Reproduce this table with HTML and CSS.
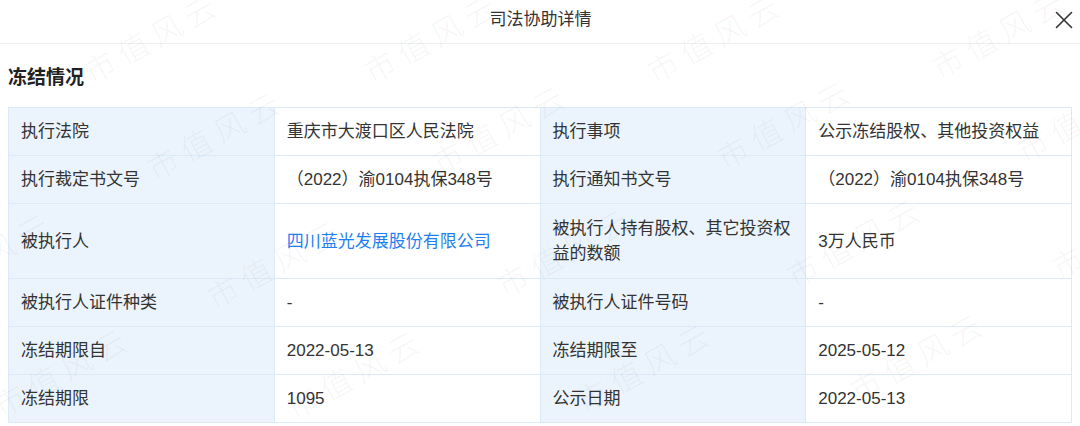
FILE: index.html
```html
<!DOCTYPE html>
<html lang="zh-CN">
<head>
<meta charset="utf-8">
<title>司法协助详情</title>
<link rel="stylesheet" href="styles.css">
</head>
<body>
<div class="dialog">
  <header class="dialog-header">
    <span class="spacer"></span>
    <h1 class="dialog-title">司法协助详情</h1>
    <button class="close-btn" aria-label="关闭">
      <svg width="18" height="18" viewBox="0 0 18 18"><path d="M1.5 1.5 L16.5 16.5 M16.5 1.5 L1.5 16.5" stroke="#333" stroke-width="1.6" fill="none" stroke-linecap="round"/></svg>
    </button>
  </header>
  <main class="dialog-body">
    <h2 class="section-title">冻结情况</h2>
    <table class="info-table">
      <tbody>
        <tr>
          <th>执行法院</th><td>重庆市大渡口区人民法院</td>
          <th>执行事项</th><td>公示冻结股权、其他投资权益</td>
        </tr>
        <tr>
          <th>执行裁定书文号</th><td>（2022）渝0104执保348号</td>
          <th>执行通知书文号</th><td>（2022）渝0104执保348号</td>
        </tr>
        <tr class="tall">
          <th>被执行人</th><td><a class="link" href="#">四川蓝光发展股份有限公司</a></td>
          <th>被执行人持有股权、其它投资权益的数额</th><td>3万人民币</td>
        </tr>
        <tr>
          <th>被执行人证件种类</th><td>-</td>
          <th>被执行人证件号码</th><td>-</td>
        </tr>
        <tr>
          <th>冻结期限自</th><td>2022-05-13</td>
          <th>冻结期限至</th><td>2025-05-12</td>
        </tr>
        <tr>
          <th>冻结期限</th><td>1095</td>
          <th>公示日期</th><td>2022-05-13</td>
        </tr>
      </tbody>
    </table>
  </main>
  <div class="watermarks" aria-hidden="true">
    <span class="wm" style="left:152px;top:36px">市值风云</span>
    <span class="wm" style="left:432px;top:36px">市值风云</span>
    <span class="wm" style="left:715px;top:36px">市值风云</span>
    <span class="wm" style="left:1000px;top:32px">市值风云</span>
    <span class="wm" style="left:215px;top:133px">市值风云</span>
    <span class="wm" style="left:500px;top:127px">市值风云</span>
    <span class="wm" style="left:785px;top:122px">市值风云</span>
    <span class="wm" style="left:1085px;top:115px">市值风云</span>
    <span class="wm" style="left:-15px;top:255px">市值风云</span>
    <span class="wm" style="left:275px;top:262px">市值风云</span>
    <span class="wm" style="left:565px;top:250px">市值风云</span>
    <span class="wm" style="left:855px;top:240px">市值风云</span>
    <span class="wm" style="left:1120px;top:232px">市值风云</span>
    <span class="wm" style="left:62px;top:370px">市值风云</span>
    <span class="wm" style="left:355px;top:372px">市值风云</span>
    <span class="wm" style="left:645px;top:365px">市值风云</span>
    <span class="wm" style="left:918px;top:355px">市值风云</span>
  </div>
</div>
</body>
</html>
```

FILE: styles.css
```css
* {
  box-sizing: border-box;
}

html, body {
  margin: 0;
  padding: 0;
  background: #ffffff;
}

body {
  font-family: "Liberation Sans", "Noto Sans CJK SC", sans-serif;
  color: #333333;
  width: 1080px;
  height: 426px;
  overflow: hidden;
}

.dialog {
  position: relative;
  width: 1080px;
  height: 426px;
  overflow: hidden;
}

.dialog-header {
  display: grid;
  grid-template-columns: 1fr auto 1fr;
  align-items: center;
  height: 44px;
  padding: 0 7px 4px 8px;
  border-bottom: 1px solid #eeeeee;
}

.dialog-title {
  margin: 0;
  font-size: 17px;
  font-weight: 400;
  line-height: 24px;
  color: #333333;
}

.close-btn {
  justify-self: end;
  display: flex;
  align-items: center;
  justify-content: center;
  width: 18px;
  height: 18px;
  padding: 0;
  border: 0;
  background: transparent;
}

.dialog-body {
  padding: 0 8px;
}

.section-title {
  margin: 0;
  padding: 21px 0 16px;
  font-size: 19px;
  font-weight: 700;
  line-height: 26px;
  color: #222222;
}

.info-table {
  width: 1064px;
  table-layout: fixed;
  border-collapse: collapse;
  border: 1px solid #dce9f6;
  font-size: 17px;
  line-height: 25px;
}

.info-table th,
.info-table td {
  width: 25%;
  padding: 11px 12px;
  border: 1px solid #dce9f6;
  text-align: left;
  vertical-align: middle;
  font-weight: 400;
  color: #333333;
}

.info-table th {
  background: #ebf4fc;
}

.info-table td {
  background: #ffffff;
}

.info-table .tall th,
.info-table .tall td {
  padding-top: 12px;
  padding-bottom: 12px;
}

.link {
  color: #1f7ff0;
  text-decoration: none;
}

.watermarks {
  position: absolute;
  inset: 0;
  pointer-events: none;
}

.wm {
  position: absolute;
  transform: translate(-50%, -50%) rotate(-29deg);
  font-family: "Noto Sans CJK SC", sans-serif;
  font-weight: 300;
  font-size: 31px;
  letter-spacing: 7px;
  white-space: nowrap;
  color: rgba(0, 0, 0, 0.055);
}
```
